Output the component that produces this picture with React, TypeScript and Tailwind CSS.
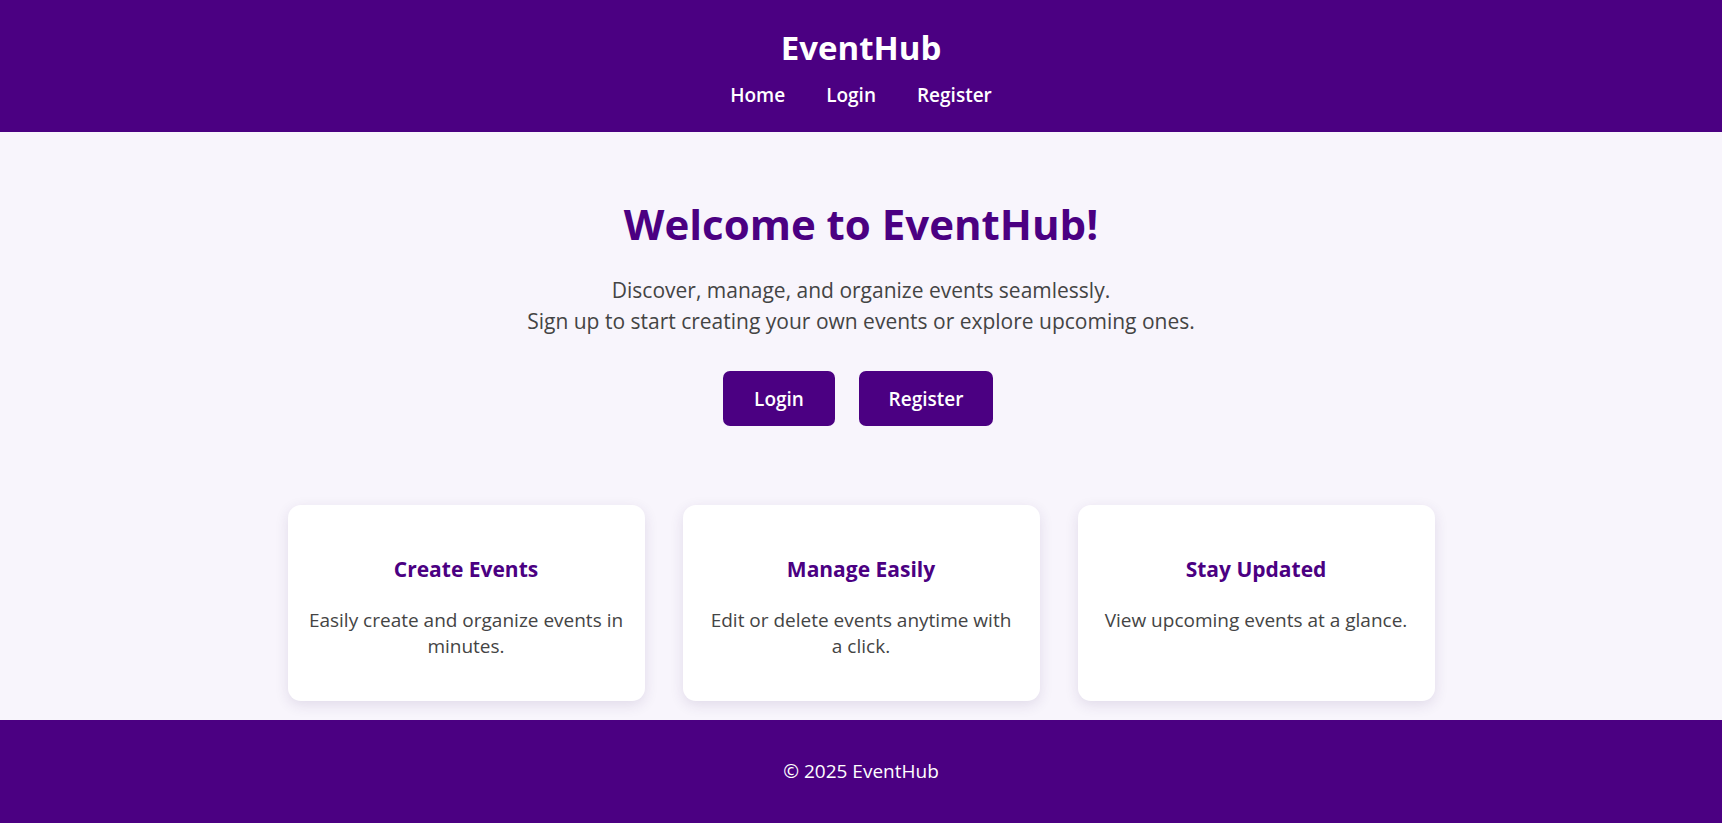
import React from 'react';

const features = [
  { title: 'Create Events', text: 'Easily create and organize events in minutes.' },
  { title: 'Manage Easily', text: 'Edit or delete events anytime with a click.' },
  { title: 'Stay Updated', text: 'View upcoming events at a glance.' },
];

const App: React.FC = () => {
  return (
    <div className="min-h-screen flex flex-col bg-[#f8f5fc] font-['Open_Sans',sans-serif]">
      <header className="h-[132px] shrink-0 bg-[#4b0082] text-white flex flex-col items-center pt-[26px]">
        <h1 className="text-[33px] leading-[44px] font-bold">EventHub</h1>
        <nav className="mt-[12px] flex gap-[41px] text-[19px] leading-[26px] font-semibold">
          <a href="#">Home</a>
          <a href="#">Login</a>
          <a href="#">Register</a>
        </nav>
      </header>

      <main className="flex-1 flex flex-col items-center pt-[64px]">
        <h2 className="text-[42px] leading-[56px] font-bold text-[#4b0082]">Welcome to EventHub!</h2>
        <p className="mt-[23px] text-center text-[21px] leading-[31px] text-[#444]">
          Discover, manage, and organize events seamlessly.
          <br />
          Sign up to start creating your own events or explore upcoming ones.
        </p>
        <div className="mt-[34px] mr-[6px] flex gap-[24px]">
          <button className="h-[55px] w-[112px] pt-[2px] rounded-[7px] bg-[#4b0082] text-white text-[19px] font-semibold">
            Login
          </button>
          <button className="h-[55px] w-[134px] pt-[2px] rounded-[7px] bg-[#4b0082] text-white text-[19px] font-semibold">
            Register
          </button>
        </div>

        <section className="mt-[79px] flex gap-[38px]">
          {features.map(f => (
            <div
              key={f.title}
              className="w-[357px] h-[196px] bg-white rounded-[13px] shadow-[0_4px_14px_rgba(60,30,100,0.12)] flex flex-col items-center pt-[50px] px-[21px] text-center"
            >
              <h3 className="text-[21px] leading-[28px] font-bold text-[#4b0082]">{f.title}</h3>
              <p className="mt-[24px] text-[19px] leading-[26px] text-[#444]">{f.text}</p>
            </div>
          ))}
        </section>
      </main>

      <footer className="h-[103px] shrink-0 bg-[#4b0082] text-white flex items-center justify-center mt-[18px]">
        <p className="text-[19px]">© 2025 EventHub</p>
      </footer>
    </div>
  );
};

export default App;
